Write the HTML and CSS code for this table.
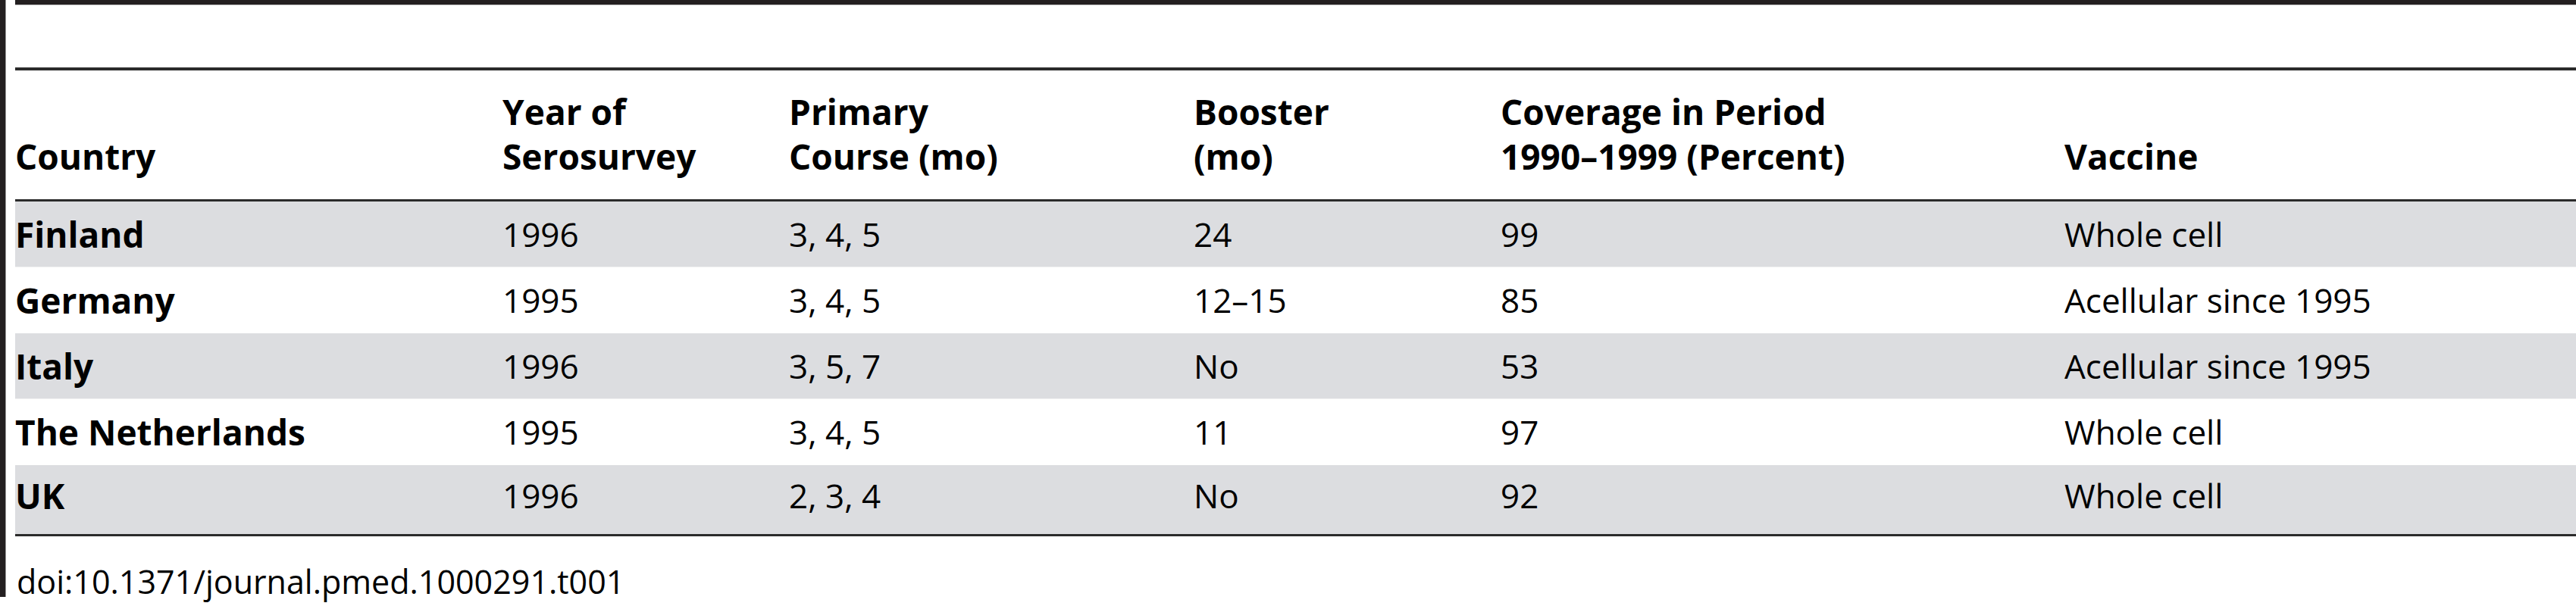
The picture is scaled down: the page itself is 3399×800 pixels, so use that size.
FILE: index.html
```html
<!DOCTYPE html>
<html>
<head>
<meta charset="utf-8">
<link rel="stylesheet" href="styles.css">
</head>
<body>
<div class="page">
  <div class="sidebar"></div>
  <div class="main">
    <div class="topbar"></div>
    <table class="data">
      <colgroup>
        <col class="c1"><col class="c2"><col class="c3"><col class="c4"><col class="c5"><col class="c6">
      </colgroup>
      <thead>
        <tr>
          <th>Country</th>
          <th>Year of<br>Serosurvey</th>
          <th>Primary<br>Course (mo)</th>
          <th>Booster<br>(mo)</th>
          <th>Coverage in Period<br>1990–1999 (Percent)</th>
          <th>Vaccine</th>
        </tr>
      </thead>
      <tbody>
        <tr class="shade"><td class="name">Finland</td><td>1996</td><td>3, 4, 5</td><td>24</td><td>99</td><td>Whole cell</td></tr>
        <tr><td class="name">Germany</td><td>1995</td><td>3, 4, 5</td><td>12–15</td><td>85</td><td>Acellular since 1995</td></tr>
        <tr class="shade"><td class="name">Italy</td><td>1996</td><td>3, 5, 7</td><td>No</td><td>53</td><td>Acellular since 1995</td></tr>
        <tr><td class="name">The Netherlands</td><td>1995</td><td>3, 4, 5</td><td>11</td><td>97</td><td>Whole cell</td></tr>
        <tr class="shade last"><td class="name">UK</td><td>1996</td><td>2, 3, 4</td><td>No</td><td>92</td><td>Whole cell</td></tr>
      </tbody>
    </table>
    <div class="doi">doi:10.1371/journal.pmed.1000291.t001</div>
  </div>
</div>
</body>
</html>
```

FILE: styles.css
```css
html, body {
  margin: 0;
  padding: 0;
  background: #ffffff;
}
.page {
  display: flex;
  align-items: flex-start;
  width: 3399px;
  height: 800px;
  overflow: hidden;
}
.sidebar {
  width: 7px;
  height: 788px;
  background: #231f20;
  border-right: 1px solid #9a9a9a;
  flex: none;
}
.main {
  flex: 1;
  margin-left: 12px;
  font-family: "Open Sans", "Liberation Sans", sans-serif;
  color: #000;
}
.topbar {
  height: 6px;
  background: #231f20;
  border-bottom: 1px solid #bdbdbd;
  margin-bottom: 82px;
}
.data {
  width: 100%;
  border-collapse: collapse;
  table-layout: fixed;
  font-size: 44px;
}
.c1 { width: 643px; }
.c2 { width: 378px; }
.c3 { width: 534px; }
.c4 { width: 405px; }
.c5 { width: 744px; }
.data thead tr {
  border-top: 4px solid #2b2b2b;
  border-bottom: 3px solid #2b2b2b;
}
.data th {
  text-align: left;
  vertical-align: bottom;
  font-weight: 700;
  font-size: 46px;
  line-height: 59px;
  padding: 25px 0 27px 0;
  white-space: nowrap;
}
.data td {
  padding: 0;
  height: 86px;
  line-height: 86px;
  vertical-align: middle;
  white-space: nowrap;
}
.data td.name {
  font-weight: 700;
  font-size: 46px;
}
.data tr.shade td {
  background: #dcdde0;
}
.data tbody tr {
  border-bottom: 1px solid #ffffff;
}
.data tbody tr.shade {
  border-bottom: 1px solid #f2f2f2;
}
.data tbody tr.last {
  border-bottom: 3px solid #2b2b2b;
}
.data tbody tr.last td {
  height: 91px;
  line-height: 80px;
  vertical-align: top;
}
.doi {
  font-size: 43px;
  line-height: 56px;
  margin-top: 32px;
  padding-left: 2px;
}
```
